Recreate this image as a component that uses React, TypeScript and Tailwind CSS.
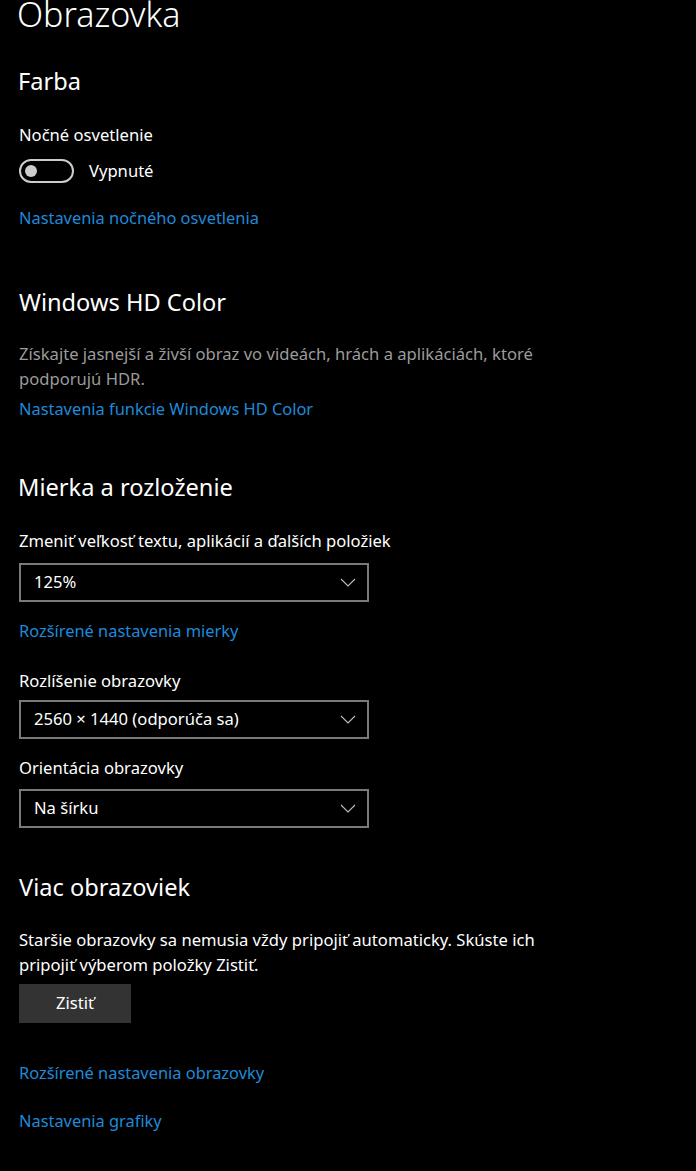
import React from 'react';

const font = { fontFamily: '"Noto Sans", "Segoe UI", sans-serif' };

const Link = ({ children, className = '' }: { children: React.ReactNode; className?: string }) => (
  <div className={`text-[16.4px] leading-[24px] text-[#1f8ad9] ${className}`}>{children}</div>
);

const Heading = ({ children, className = '' }: { children: React.ReactNode; className?: string }) => (
  <h2 className={`text-[23.6px] leading-[32px] text-white ${className}`}>{children}</h2>
);

const Label = ({ children, className = '' }: { children: React.ReactNode; className?: string }) => (
  <div className={`text-[16.6px] leading-[24px] text-white ${className}`}>{children}</div>
);

const Select = ({ value, className = '' }: { value: string; className?: string }) => (
  <div
    className={`flex h-[39px] w-[350px] items-center justify-between border-2 border-[#7a7a7a] pl-[13px] pr-[11px] text-[16.6px] text-white ${className}`}
  >
    <span>{value}</span>
    <svg width="16" height="9" viewBox="0 0 16 9" fill="none">
      <polyline points="1,1 8,8 15,1" stroke="#bdbdbd" strokeWidth="1.1" />
    </svg>
  </div>
);

export default function App() {
  return (
    <div className="min-h-[1171px] overflow-hidden bg-black pl-[19px]" style={font}>
      <h1 className="mt-[-6px] ml-[-2px] text-[34px] font-light leading-[40px] text-white">Obrazovka</h1>

      <Heading className="mt-[31px] ml-[-1px]">Farba</Heading>
      <Label className="mt-[26px]">Nočné osvetlenie</Label>
      <div className="mt-[11px] flex items-center">
        <div className="flex h-[24px] w-[55px] items-center rounded-full border-2 border-[#cccccc] pl-[4px]">
          <div className="h-[12px] w-[12px] rounded-full bg-[#cccccc]" />
        </div>
        <span className="ml-[15px] mt-[1px] text-[16.6px] leading-[24px] text-white">Vypnuté</span>
      </div>
      <Link className="mt-[23px]">Nastavenia nočného osvetlenia</Link>

      <Heading className="mt-[56px]">Windows HD Color</Heading>
      <p className="mt-[23px] w-[550px] text-[16.6px] leading-[25px] text-[#9b9b9b]">
        Získajte jasnejší a živší obraz vo videách, hrách a aplikáciách, ktoré podporujú HDR.
      </p>
      <Link className="mt-[6px]">Nastavenia funkcie Windows HD Color</Link>

      <Heading className="mt-[50px] ml-[-1px]">Mierka a rozloženie</Heading>
      <Label className="mt-[26px]">Zmeniť veľkosť textu, aplikácií a ďalších položiek</Label>
      <Select className="mt-[10px]" value="125%" />
      <Link className="mt-[17px]">Rozšírené nastavenia mierky</Link>

      <Label className="mt-[26px]">Rozlíšenie obrazovky</Label>
      <Select className="mt-[7px]" value="2560 × 1440 (odporúča sa)" />
      <Label className="mt-[17px]">Orientácia obrazovky</Label>
      <Select className="mt-[9px]" value="Na šírku" />

      <Heading className="mt-[43px]">Viac obrazoviek</Heading>
      <p className="mt-[24px] w-[550px] text-[16.6px] leading-[25px] text-white">
        Staršie obrazovky sa nemusia vždy pripojiť automaticky. Skúste ich pripojiť výberom položky Zistiť.
      </p>
      <button className="mt-[7px] flex h-[39px] w-[112px] items-center justify-center bg-[#333333] text-[16.6px] text-white">
        Zistiť
      </button>
      <Link className="mt-[38px]">Rozšírené nastavenia obrazovky</Link>
      <Link className="mt-[24px]">Nastavenia grafiky</Link>
    </div>
  );
}
